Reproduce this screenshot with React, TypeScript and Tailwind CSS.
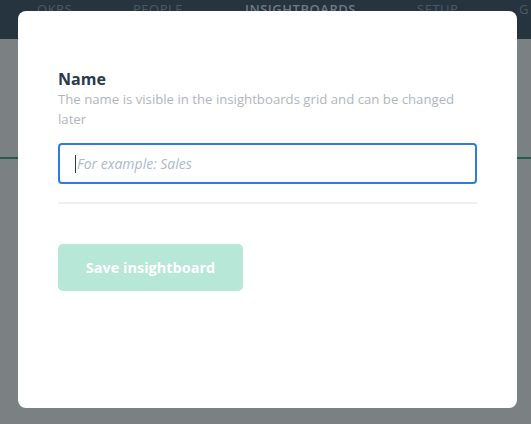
import React from 'react';

// --- Create insightboard dialog over dimmed app ---
const navItems = [
    { label: 'OKRS', left: 'left-[37px]', active: false },
    { label: 'PEOPLE', left: 'left-[133px]', active: false },
    { label: 'INSIGHTBOARDS', left: 'left-[245px]', active: true },
    { label: 'SETUP', left: 'left-[417px]', active: false },
    { label: 'G', left: 'left-[519px]', active: false },
];

const App: React.FC = () => {
    return (
        <div className="relative w-[531px] h-[424px] overflow-hidden bg-[#7b8083] font-['Open_Sans','Liberation_Sans',sans-serif]">
            {/* dimmed app behind the dialog */}
            <div className="relative h-[39px] bg-[#25343f]">
                {navItems.map((item) => (
                    <span
                        key={item.label}
                        className={`absolute top-[0px] ${item.left} text-[13px] tracking-[0.04em] ${item.active ? 'text-[#6e7a83] font-semibold' : 'text-[#4c5a64]'}`}
                    >
                        {item.label}
                    </span>
                ))}
            </div>
            <div className="mt-[118px] h-[2px] bg-[#245c4b]" />

            {/* dialog */}
            <div className="absolute left-[18px] top-[11px] w-[499px] h-[397px] rounded-[8px] bg-white px-[40px] pt-[58px]">
                <h2 className="text-[16px] leading-[20px] font-bold text-[#293a4c]">Name</h2>
                <p className="text-[13.2px] leading-[20px] text-[#b1b6bd]">
                    The name is visible in the insightboards grid and can be changed later
                </p>
                <div className="mt-[14px] h-[41px] w-[419px] rounded-[4px] border-2 border-[#2f7ce0] flex items-center pl-[15px]">
                    <span className="w-px h-[18px] bg-[#2b3a4a]" />
                    <span className="ml-px text-[14px] italic text-[#a9bbcd]">For example: Sales</span>
                </div>
                <div className="mt-[18px] h-[2px] w-[419px] bg-[#eef0f4]" />
                <button className="mt-[40px] w-[185px] h-[47px] rounded-[5px] bg-[#b7e7d6] text-white text-[14.5px] font-bold">
                    Save insightboard
                </button>
            </div>
        </div>
    );
};

export default App;
